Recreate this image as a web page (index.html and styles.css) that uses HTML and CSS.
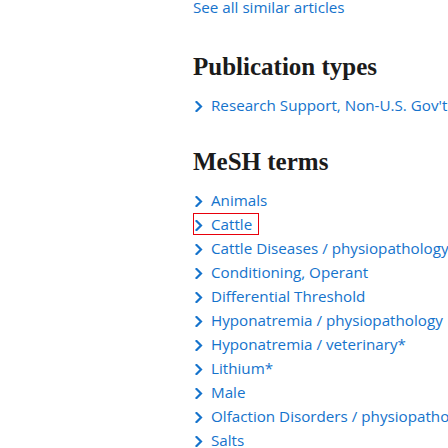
FILE: index.html
```html
<!DOCTYPE html>
<html lang="en">
<head>
<meta charset="utf-8">
<title>Article details</title>
<link rel="stylesheet" href="styles.css">
</head>
<body>
<main class="page">
  <div class="similar">
    <a class="see-all" href="#">See all similar articles</a>
  </div>

  <section class="section">
    <h2 class="title">Publication types</h2>
    <ul class="terms">
      <li><a class="term" href="#"><svg class="chev" viewBox="0 0 8 11" width="8" height="11"><polyline points="1.5,1 6,5.5 1.5,10"/></svg>Research Support, Non-U.S. Gov't</a></li>
    </ul>
  </section>

  <section class="section">
    <h2 class="title">MeSH terms</h2>
    <ul class="terms">
      <li><a class="term" href="#"><svg class="chev" viewBox="0 0 8 11" width="8" height="11"><polyline points="1.5,1 6,5.5 1.5,10"/></svg>Animals</a></li>
      <li><a class="term focused" href="#"><svg class="chev" viewBox="0 0 8 11" width="8" height="11"><polyline points="1.5,1 6,5.5 1.5,10"/></svg>Cattle</a></li>
      <li><a class="term" href="#"><svg class="chev" viewBox="0 0 8 11" width="8" height="11"><polyline points="1.5,1 6,5.5 1.5,10"/></svg>Cattle Diseases / physiopathology</a></li>
      <li><a class="term" href="#"><svg class="chev" viewBox="0 0 8 11" width="8" height="11"><polyline points="1.5,1 6,5.5 1.5,10"/></svg>Conditioning, Operant</a></li>
      <li><a class="term" href="#"><svg class="chev" viewBox="0 0 8 11" width="8" height="11"><polyline points="1.5,1 6,5.5 1.5,10"/></svg>Differential Threshold</a></li>
      <li><a class="term" href="#"><svg class="chev" viewBox="0 0 8 11" width="8" height="11"><polyline points="1.5,1 6,5.5 1.5,10"/></svg>Hyponatremia / physiopathology</a></li>
      <li><a class="term" href="#"><svg class="chev" viewBox="0 0 8 11" width="8" height="11"><polyline points="1.5,1 6,5.5 1.5,10"/></svg>Hyponatremia / veterinary*</a></li>
      <li><a class="term" href="#"><svg class="chev" viewBox="0 0 8 11" width="8" height="11"><polyline points="1.5,1 6,5.5 1.5,10"/></svg>Lithium*</a></li>
      <li><a class="term" href="#"><svg class="chev" viewBox="0 0 8 11" width="8" height="11"><polyline points="1.5,1 6,5.5 1.5,10"/></svg>Male</a></li>
      <li><a class="term" href="#"><svg class="chev" viewBox="0 0 8 11" width="8" height="11"><polyline points="1.5,1 6,5.5 1.5,10"/></svg>Olfaction Disorders / physiopathology</a></li>
      <li><a class="term" href="#"><svg class="chev" viewBox="0 0 8 11" width="8" height="11"><polyline points="1.5,1 6,5.5 1.5,10"/></svg>Salts</a></li>
    </ul>
  </section>
</main>
</body>
</html>
```
FILE: styles.css
```css
html, body {
  margin: 0;
  padding: 0;
  background: #ffffff;
  overflow: hidden;
}

body {
  font-family: "Open Sans", "Noto Sans", sans-serif;
  font-size: 15.2px;
  line-height: 24px;
  color: #212121;
}

.page {
  margin-top: -5px;
  padding-left: 193px;
  white-space: nowrap;
}

.similar {
  margin-bottom: 34px;
}

a {
  color: #1573cc;
  text-decoration: none;
}

.section + .section {
  margin-top: 31px;
}

.title {
  margin: 0 0 11px;
  font-family: "Liberation Serif", "Times New Roman", serif;
  font-weight: bold;
  font-size: 25px;
  line-height: 28.8px;
  color: #1b1b1b;
}

.terms {
  list-style: none;
  margin: 0;
  padding: 0;
}

.terms li {
  height: 24px;
}

.term {
  display: inline-block;
  line-height: 20px;
  border: 1px solid transparent;
  padding: 0 6px 0 1px;
}

.term.focused {
  border-color: #e8000b;
}

.chev {
  vertical-align: -1px;
  margin-right: 8px;
  fill: none;
  stroke: #1573cc;
  stroke-width: 2.2;
  stroke-linecap: square;
}
```
